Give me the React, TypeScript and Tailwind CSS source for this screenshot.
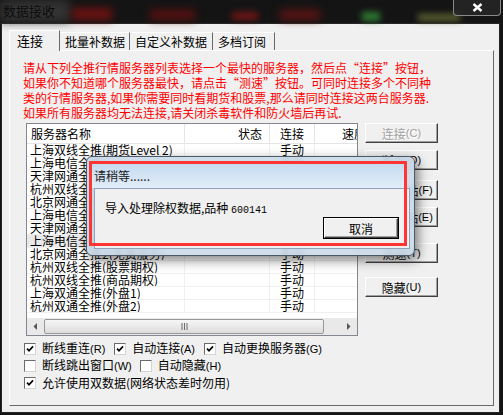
import React from 'react';

const servers = [
  '上海双线全推(期货Level 2)',
  '上海电信全推1',
  '天津网通全推1',
  '杭州双线全推1',
  '北京网通全推1',
  '上海电信全推2',
  '天津网通全推2',
  '上海电信全推3',
  '北京网通全推2(免费服务)',
  '杭州双线全推(股票期权)',
  '杭州双线全推(商品期权)',
  '上海双通全推(外盘1)',
  '杭州双通全推(外盘2)'
];

const Key = ({ k }: { k: string }) => (
  <span className="font-['Liberation_Sans',sans-serif] text-[11px]">({k})</span>
);

const Btn = ({ label, k, disabled, className = '' }: { label: string; k: string; disabled?: boolean; className?: string }) => (
  <div
    className={`flex h-[20px] w-[73px] items-center justify-center border border-b-[#404040] border-l-white border-r-[#404040] border-t-white bg-[#f0f0f0] shadow-[inset_-1px_-1px_0_#a0a0a0] ${
      disabled ? 'text-[#a0a0a0] [text-shadow:1px_1px_0_#fff]' : 'text-black'
    } ${className}`}
  >
    {label}
    <Key k={k} />
  </div>
);

const Check = ({ checked }: { checked?: boolean }) => (
  <span className="flex h-[12px] w-[12px] shrink-0 items-center justify-center border border-b-[#d4d4d4] border-l-[#6b6b6b] border-r-[#d4d4d4] border-t-[#6b6b6b] bg-white">
    {checked && (
      <svg width="8" height="8" viewBox="0 0 8 8">
        <path d="M1 3.6 L3 5.8 L7 1.4" stroke="#000" strokeWidth="1.7" fill="none" />
      </svg>
    )}
  </span>
);

const Opt = ({ label, k, checked }: { label: React.ReactNode; k?: string; checked?: boolean }) => (
  <div className="flex items-center">
    <Check checked={checked} />
    <span className="ml-[6px] whitespace-nowrap">
      {label}
      {k && <Key k={k} />}
    </span>
  </div>
);

export default function App() {
  return (
    <div className="relative h-[415px] w-[503px] overflow-hidden bg-[#141414] font-['Noto_Sans_CJK_SC',sans-serif] text-[12px] leading-[13px] text-black">
      {/* title bar over blurred chart */}
      <div className="relative h-[23px]">
        <div className="absolute left-0 top-0 h-[22px] w-[70px] bg-[#333] blur-[5px]" />
        <div className="absolute left-[72px] top-[8px] h-[12px] w-[40px] bg-[#6e1212] blur-[4px]" />
        <div className="absolute left-[150px] top-[10px] h-[10px] w-[45px] bg-[#5a1010] blur-[4px]" />
        <div className="absolute left-[232px] top-[12px] h-[8px] w-[26px] bg-[#701515] blur-[3px]" />
        <div className="absolute left-[280px] top-[10px] h-[10px] w-[40px] bg-[#5e1414] blur-[4px]" />
        <div className="absolute left-[362px] top-[12px] h-[9px] w-[18px] bg-[#2e7a32] blur-[3px]" />
        <div className="absolute left-[418px] top-[14px] h-[7px] w-[42px] bg-[#5c6030] blur-[3px]" />
        <span className="relative ml-[3px] inline-block pt-[3px] text-[13px] leading-[16px] text-[#0c0c0c]">数据接收</span>
        <div className="absolute right-[2px] top-0 flex h-[16px] w-[48px] items-center justify-center rounded-b-[4px] border border-t-0 border-[#8a8a8a] bg-[#2a2a2a]/70">
          <svg width="11" height="9" viewBox="0 0 11 9">
            <path d="M1.5 1 L9.5 8 M9.5 1 L1.5 8" stroke="#fff" strokeWidth="2.4" />
          </svg>
        </div>
      </div>

      {/* window body */}
      <div className="ml-[1px] h-[390px] w-[499px] border border-[#262626] bg-[#f0f0f0] pl-[7px] pt-[6px]">
        <div className="flex h-[20px] items-end">
          <div className="relative z-10 -mb-px flex h-[21px] w-[51px] items-start border border-b-0 border-l-white border-r-[#696969] border-t-white bg-[#f0f0f0] pl-[7px] pt-[2px] text-[13px] leading-[16px]">
            连接
          </div>
          <div className="flex h-[18px] w-[70px] items-center border border-b-0 border-l-0 border-r-[#696969] border-t-white pl-[5px]">批量补数据</div>
          <div className="flex h-[18px] w-[83px] items-center border border-b-0 border-l-0 border-r-[#696969] border-t-white pl-[5px]">自定义补数据</div>
          <div className="flex h-[18px] w-[62px] items-center border border-b-0 border-l-0 border-r-[#696969] border-t-white pl-[5px]">多档订阅</div>
        </div>

        <div className="h-[356px] w-[485px] border border-b-[#696969] border-l-white border-r-[#696969] border-t-white pl-[13px] pt-[9px]">
          <div className="whitespace-nowrap text-[12px] leading-[15px] text-[#ff0000]">
            <div>请从下列全推行情服务器列表选择一个最快的服务器，然后点“连接”按钮，</div>
            <div>如果你不知道哪个服务器最快，请点击“测速”按钮。可同时连接多个不同种</div>
            <div>类的行情服务器,如果你需要同时看期货和股票,那么请同时连接这两台服务器.</div>
            <div>如果所有服务器均无法连接,请关闭杀毒软件和防火墙后再试.</div>
          </div>

          <div className="ml-[3px] mt-[3px] flex">
            <div className="flex h-[213px] w-[332px] flex-col overflow-hidden border border-[#828790] bg-white">
              <div className="flex h-[20px] shrink-0 whitespace-nowrap border-b border-[#e5e5e5]">
                <div className="flex w-[158px] shrink-0 items-center border-r border-[#e5e5e5] pl-[4px]">服务器名称</div>
                <div className="flex w-[85px] shrink-0 items-center justify-end border-r border-[#e5e5e5] pr-[7px]">状态</div>
                <div className="flex w-[45px] shrink-0 items-center justify-center border-r border-[#e5e5e5]">连接</div>
                <div className="flex shrink-0 items-center pl-[27px]">速度</div>
              </div>
              {servers.map((name, i) => (
                <div key={i} className={`flex h-[13px] shrink-0 whitespace-nowrap border-b border-[#f0f0f0] ${i === 7 ? 'bg-[#e9e9e9]' : ''}`}>
                  <div className="w-[158px] shrink-0 overflow-hidden border-r border-[#f0f0f0] pl-[3px] leading-[12px]">{name}</div>
                  <div className="w-[85px] shrink-0 border-r border-[#f0f0f0]" />
                  <div className="w-[45px] shrink-0 border-r border-[#f0f0f0] text-center leading-[12px]">手动</div>
                  <div className="flex-1" />
                </div>
              ))}
              <div className="flex-1" />
              <div className="flex h-[17px] shrink-0 items-center bg-[#e9e9e9]">
                <div className="flex h-[17px] w-[17px] shrink-0 items-center justify-center">
                  <svg width="5" height="7" viewBox="0 0 5 7">
                    <path d="M4 0 L0.5 3.5 L4 7 Z" fill="#555" />
                  </svg>
                </div>
                <div className="flex h-[15px] w-[280px] shrink-0 items-center justify-center rounded-[2px] border border-[#979797] bg-gradient-to-b from-[#f6f6f6] to-[#dcdcdc]">
                  <svg width="7" height="7" viewBox="0 0 7 7">
                    <path d="M1 0 V7 M3.5 0 V7 M6 0 V7" stroke="#6a6a6a" strokeWidth="1" />
                  </svg>
                </div>
                <div className="flex-1" />
                <div className="flex h-[17px] w-[17px] shrink-0 items-center justify-center">
                  <svg width="5" height="7" viewBox="0 0 5 7">
                    <path d="M1 0 L4.5 3.5 L1 7 Z" fill="#555" />
                  </svg>
                </div>
              </div>
            </div>

            <div className="ml-[7px] flex flex-col">
              <Btn label="连接" k="C" disabled />
              <Btn label="断开" k="D" className="mt-[7px]" />
              <Btn label="修改主站" k="F" className="mt-[10px]" />
              <Btn label="删除主站" k="E" className="mt-[7px]" />
              <Btn label="测速" k="T" className="mt-[16px]" />
              <Btn label="隐藏" k="U" className="mt-[14px]" />
            </div>
          </div>

          <div className="ml-[1px] mt-[4px] flex flex-col">
            <div className="flex h-[17px] items-center gap-[9px]">
              <Opt label="断线重连" k="R" checked />
              <Opt label="自动连接" k="A" checked />
              <Opt label="自动更换服务器" k="G" checked />
            </div>
            <div className="flex h-[17px] items-center gap-[8px]">
              <Opt label="断线跳出窗口" k="W" />
              <Opt label="自动隐藏" k="H" />
            </div>
            <div className="flex h-[17px] items-center">
              <Opt label="允许使用双数据(网络状态差时勿用)" checked />
            </div>
          </div>
        </div>
      </div>

      {/* waiting dialog */}
      <div className="absolute left-[86px] top-[156px] h-[100px] w-[329px] rounded-[6px] border border-[#4a5868] bg-[#cbdaea]/90 shadow-[3px_4px_12px_rgba(0,0,0,0.5)] backdrop-blur-[2px]">
        <div className="absolute left-[3px] top-[5px] h-[26px] w-[317px] bg-gradient-to-b from-[#c4d9ef] to-[#e2edf8]" />
        <div className="absolute left-[7px] top-[11px] text-[12px] leading-[15px] text-[#1b1b1b]">请稍等......</div>
        <div className="absolute left-[7px] top-[31px] h-[61px] w-[316px] border border-[#8fa3b9] bg-[#f0f0f0]">
          <div className="ml-[10px] mt-[11px] whitespace-nowrap leading-[15px]">
            导入处理除权数据,品种 <span className="font-['Liberation_Mono',monospace] text-[10px]">600141</span>
          </div>
          <div className="absolute left-[229px] top-[29px] flex h-[20px] w-[74px] items-center justify-center border border-b-[#404040] border-l-white border-r-[#404040] border-t-white bg-[#f0f0f0] shadow-[inset_-1px_-1px_0_#a0a0a0,0_0_0_1px_#000]">
            取消
          </div>
        </div>
        <div className="pointer-events-none absolute left-[2px] top-[4px] h-[85px] w-[318px] border-[3px] border-[#ff3535]" />
      </div>
    </div>
  );
}
